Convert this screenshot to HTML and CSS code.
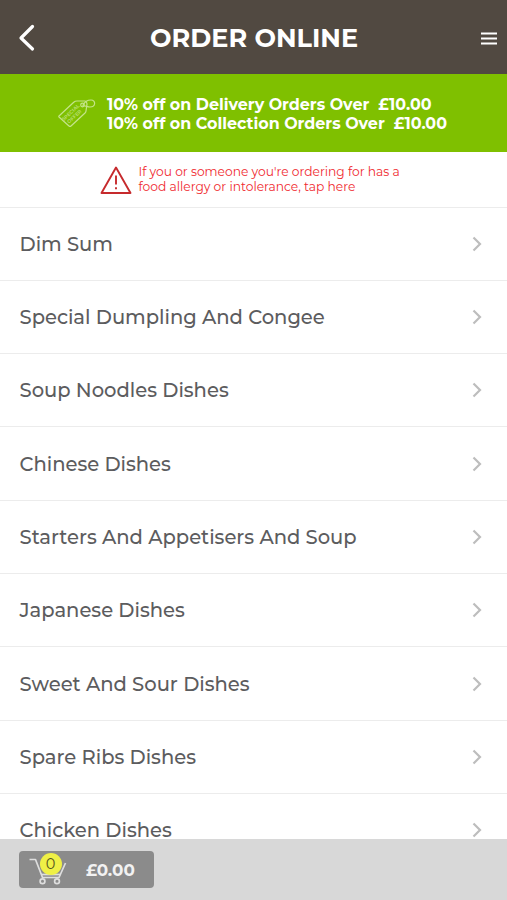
FILE: index.html
```html
<!DOCTYPE html>
<html lang="en">
<head>
<meta charset="utf-8">
<title>Order Online</title>
<link rel="stylesheet" href="styles.css">
</head>
<body>
<div class="app">
  <header class="header">
    <svg class="back" viewBox="0 0 18 28"><path d="M14.500 2.500 3 14l11.500 11"/></svg>
    <h1 class="title">ORDER ONLINE</h1>
    <svg class="burger" viewBox="0 0 16 13"><path d="M0 1.500h16M0 6.500h16M0 11.500h16"/></svg>
  </header>
  <section class="offer">
    <svg class="tag" viewBox="0 0 40 32">
      <path d="M2 19 17 5Q18 4 20 4L28 4Q30 5 30 7L29 14Q29 15 28 16L14 29Q13 30 12 29L2 20Q1.500 19.500 2 19Z"/>
      <path d="M26 8c2-4 5-5 8-5 5 0 5 7-1 7-3 0-5-2-8-1"/>
      <circle cx="25.500" cy="8" r="1.800"/>
      <g class="tag-text" transform="translate(15.500 17.500) rotate(-43)"><text x="0" y="-1">SPECIAL</text><text x="0" y="4.500">OFFER</text></g>
    </svg>
    <div class="offer-text">
      <p>10% off on Delivery Orders Over&nbsp; £10.00</p>
      <p>10% off on Collection Orders Over&nbsp; £10.00</p>
    </div>
  </section>
  <section class="allergy">
    <svg class="warning" viewBox="0 0 32 29"><path d="M16 1.500 30.500 27h-29Z"/><path d="M16 9.500v9M16 21.200v2"/></svg>
    <div class="allergy-text">
      <p>If you or someone you're ordering for has a</p>
      <p>food allergy or intolerance, tap here</p>
    </div>
  </section>
  <main class="menu">
    <div class="row"><span>Dim Sum</span><svg class="chev" viewBox="0 0 10 16"><path d="m1.500 1.500 6.500 6.500-6.500 6.500"/></svg></div>
    <div class="row"><span>Special Dumpling And Congee</span><svg class="chev" viewBox="0 0 10 16"><path d="m1.500 1.500 6.500 6.500-6.500 6.500"/></svg></div>
    <div class="row"><span>Soup Noodles Dishes</span><svg class="chev" viewBox="0 0 10 16"><path d="m1.500 1.500 6.500 6.500-6.500 6.500"/></svg></div>
    <div class="row"><span>Chinese Dishes</span><svg class="chev" viewBox="0 0 10 16"><path d="m1.500 1.500 6.500 6.500-6.500 6.500"/></svg></div>
    <div class="row"><span>Starters And Appetisers And Soup</span><svg class="chev" viewBox="0 0 10 16"><path d="m1.500 1.500 6.500 6.500-6.500 6.500"/></svg></div>
    <div class="row"><span>Japanese Dishes</span><svg class="chev" viewBox="0 0 10 16"><path d="m1.500 1.500 6.500 6.500-6.500 6.500"/></svg></div>
    <div class="row"><span>Sweet And Sour Dishes</span><svg class="chev" viewBox="0 0 10 16"><path d="m1.500 1.500 6.500 6.500-6.500 6.500"/></svg></div>
    <div class="row"><span>Spare Ribs Dishes</span><svg class="chev" viewBox="0 0 10 16"><path d="m1.500 1.500 6.500 6.500-6.500 6.500"/></svg></div>
    <div class="row"><span>Chicken Dishes</span><svg class="chev" viewBox="0 0 10 16"><path d="m1.500 1.500 6.500 6.500-6.500 6.500"/></svg></div>
  </main>
  <footer class="footer">
    <div class="basket">
      <div class="cart">
        <svg viewBox="0 0 38 30"><path d="M.5 3.500h6L13.500 21.500H30L36.500 7"/><path d="M12.500 18.500h19"/><circle cx="13.500" cy="25.200" r="2.400"/><circle cx="28" cy="25.200" r="2.400"/></svg>
        <span class="count">0</span>
      </div>
      <span class="total">£0.00</span>
    </div>
  </footer>
</div>
</body>
</html>
```
FILE: styles.css
```css
* { box-sizing: border-box; }
body { margin: 0; font-family: Montserrat, Inter, sans-serif; background: #fff; }
p, h1 { margin: 0; }
svg { display: block; fill: none; flex: none; }
.app { height: 900px; overflow: hidden; position: relative; }

.header { height: 74px; background: #514941; display: flex; align-items: center; padding: 2px 10px 0 18px; }
.back { width: 18px; height: 28px; stroke: #fff; stroke-width: 3.2; stroke-linecap: round; stroke-linejoin: round; }
.title { flex: 1; text-align: center; margin-right: 18px; padding-left: 9px; color: #fff; font-size: 25.5px; font-weight: 700; line-height: 32px; white-space: nowrap; }
.burger { width: 16px; height: 13px; stroke: #fff; stroke-width: 2; }

.offer { height: 78px; background: #7fc000; display: flex; align-items: flex-start; padding: 20.500px 0 0 57px; }
.tag { width: 40px; height: 32px; margin-top: 2.500px; stroke: #c5e48a; stroke-width: 1.200; }
.tag-text { font-size: 5px; font-weight: 700; text-anchor: middle; fill: #b4dc68; stroke: none; }
.offer-text { margin-left: 10px; color: #fff; font-size: 15.920px; font-weight: 700; line-height: 19px; white-space: nowrap; }

.allergy { height: 54.500px; display: flex; padding: 13px 0 0 100px; }
.warning { width: 32px; height: 29px; margin-top: 1px; stroke: #c62a2d; stroke-width: 1.900; stroke-linejoin: round; }
.allergy-text { margin-left: 6.500px; color: #f02a30; font-size: 12.250px; line-height: 14.5px; white-space: nowrap; }

.row { height: 73.3px; border-top: 1.5px solid #ececec; display: flex; align-items: center; justify-content: space-between; padding: 0.500px 25px 0 19.500px; color: #5c5c5e; font-size: 19.54px; font-weight: 500; white-space: nowrap; }
.chev { width: 10px; height: 16px; stroke: #bdbdbd; stroke-width: 2.200; }

.footer { position: absolute; left: 0; right: 0; bottom: 0; height: 61px; background: #d8d8d8; padding: 12px 19px; }
.basket { width: 135px; height: 37px; border-radius: 4px; background: #8b8b8b; display: flex; align-items: flex-start; padding: 5px 0 0 10px; }
.cart { position: relative; width: 38px; height: 30px; }
.cart svg { width: 38px; height: 30px; stroke: #dedede; stroke-width: 1.700; stroke-linejoin: round; }
.count { position: absolute; left: 10.500px; top: -3px; width: 22px; height: 22px; border-radius: 50%; background: #eff046; color: #55551f; font-size: 14.500px; line-height: 22px; text-align: center; }
.total { margin-left: 19px; color: #f2f2f2; font-size: 16.8px; font-weight: 700; line-height: 28px; }
```
